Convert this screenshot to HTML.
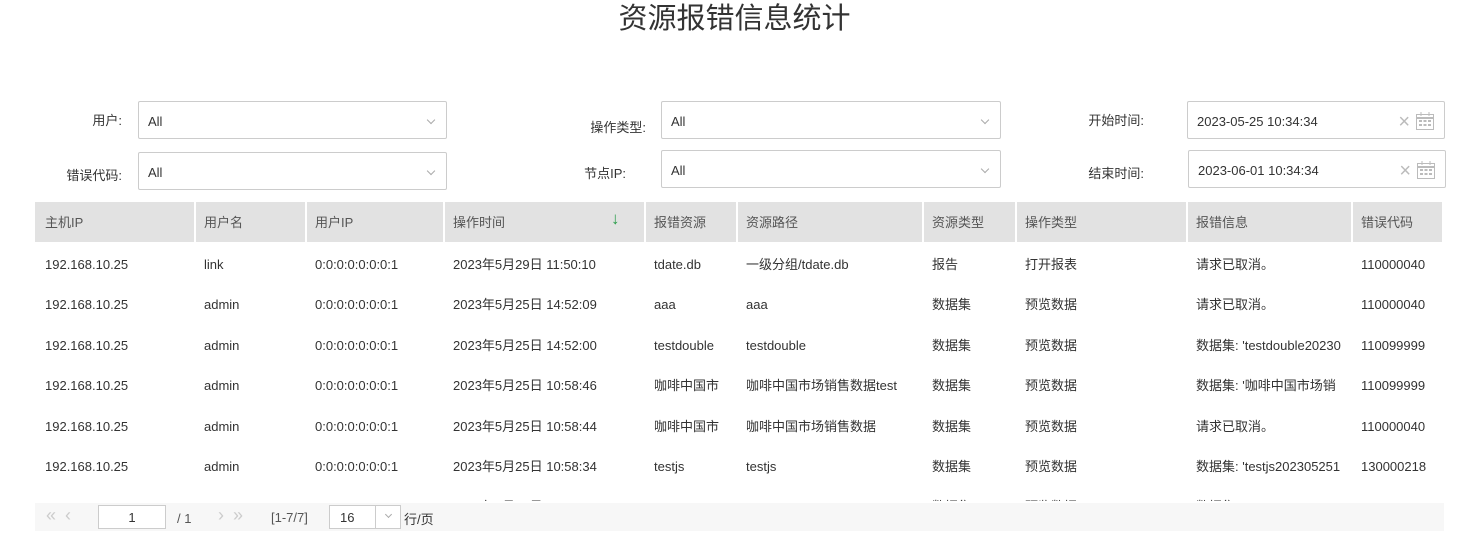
<!DOCTYPE html>
<html><head><meta charset="utf-8"><style>
*{box-sizing:border-box;margin:0;padding:0}
body{width:1469px;height:540px;background:#fff;font-family:"Liberation Sans","Noto Sans CJK SC",sans-serif;color:#333;font-size:13px;position:relative;overflow:hidden}
.a{position:absolute}
.t{left:0;width:1469px;top:0;text-align:center;font-size:29px;line-height:38px;color:#333}
.lbl{font-size:13px;text-align:right;color:#333}
.sel{border:1px solid #ccc;border-radius:2px;height:38px;line-height:40px;padding-left:9px;font-size:13px}
.chev{position:absolute;right:12px;top:15px;width:6px;height:6px;border-right:1px solid #aaa;border-bottom:1px solid #aaa;transform:rotate(45deg)}
.tbl{left:35px;top:202px;width:1409px;height:299px;overflow:hidden}
.row{position:absolute;left:0;height:40px;width:1409px}
.c{position:absolute;top:0;height:40px;line-height:42px;padding-left:8px;white-space:nowrap;overflow:hidden}
.c0{padding-left:10px}
.hd .c{background:#e2e2e2;color:#555}
.pg{left:35px;top:503px;width:1409px;height:28px;background:#f7f7f7;font-size:13px;color:#555}
</style></head><body>
<div class="a t">资源报错信息统计</div>

<div class="a lbl" style="left:60px;top:110px;width:62px">用户:</div>
<div class="a sel" style="left:138px;top:101px;width:309px">All<span class="chev"></span></div>
<div class="a lbl" style="left:40px;top:165px;width:82px">错误代码:</div>
<div class="a sel" style="left:138px;top:152px;width:309px">All<span class="chev"></span></div>

<div class="a lbl" style="left:560px;top:117px;width:86px">操作类型:</div>
<div class="a sel" style="left:661px;top:101px;width:340px">All<span class="chev"></span></div>
<div class="a lbl" style="left:560px;top:163px;width:66px">节点IP:</div>
<div class="a sel" style="left:661px;top:150px;width:340px">All<span class="chev"></span></div>

<div class="a lbl" style="left:1058px;top:110px;width:86px">开始时间:</div>
<div class="a sel" style="left:1187px;top:101px;width:258px">2023-05-25 10:34:34<span class="a" style="right:34px;top:0;color:#bbb;font-size:20px">×</span><svg class="a" style="right:9px;top:9px" width="20" height="20" viewBox="0 0 20 20"><rect x="1.5" y="3.5" width="17" height="15" fill="none" stroke="#bbb"/><line x1="1.5" y1="7" x2="18.5" y2="7" stroke="#bbb" stroke-width="2"/><line x1="6" y1="1" x2="6" y2="5" stroke="#bbb"/><line x1="14" y1="1" x2="14" y2="5" stroke="#bbb"/><g fill="#bbb"><rect x="4" y="9" width="3" height="2"/><rect x="8.5" y="9" width="3" height="2"/><rect x="13" y="9" width="3" height="2"/><rect x="4" y="13" width="3" height="2"/><rect x="8.5" y="13" width="3" height="2"/><rect x="13" y="13" width="3" height="2"/></g></svg></div>
<div class="a lbl" style="left:1058px;top:163px;width:86px">结束时间:</div>
<div class="a sel" style="left:1188px;top:150px;width:258px">2023-06-01 10:34:34<span class="a" style="right:34px;top:0;color:#bbb;font-size:20px">×</span><svg class="a" style="right:9px;top:9px" width="20" height="20" viewBox="0 0 20 20"><rect x="1.5" y="3.5" width="17" height="15" fill="none" stroke="#bbb"/><line x1="1.5" y1="7" x2="18.5" y2="7" stroke="#bbb" stroke-width="2"/><line x1="6" y1="1" x2="6" y2="5" stroke="#bbb"/><line x1="14" y1="1" x2="14" y2="5" stroke="#bbb"/><g fill="#bbb"><rect x="4" y="9" width="3" height="2"/><rect x="8.5" y="9" width="3" height="2"/><rect x="13" y="9" width="3" height="2"/><rect x="4" y="13" width="3" height="2"/><rect x="8.5" y="13" width="3" height="2"/><rect x="13" y="13" width="3" height="2"/></g></svg></div>

<div class="a tbl" id="tb"></div>
<div class="a pg">
<span class="a" style="left:11px;top:2px;color:#ccc;font-size:18px;letter-spacing:2px">«&nbsp;‹</span>
<div class="a" style="left:63px;top:2px;width:68px;height:24px;border:1px solid #ccc;background:#fff;text-align:center;line-height:24px;color:#333">1</div>
<span class="a" style="left:142px;top:8px">/ 1</span>
<span class="a" style="left:183px;top:2px;color:#ccc;font-size:18px;letter-spacing:2px">›&nbsp;»</span>
<span class="a" style="left:236px;top:7px">[1-7/7]</span>
<div class="a" style="left:294px;top:2px;width:72px;height:24px;border:1px solid #ccc;background:#fff;line-height:24px;padding-left:10px;color:#333">16<span class="a" style="left:45px;top:0;width:1px;height:22px;background:#ccc"></span><span class="chev" style="right:9px;top:6px;width:5px;height:5px"></span></div>
<span class="a" style="left:369px;top:6px;color:#333">行/页</span>
</div>
<script>
var x=[0,161,272,410,611,703,889,982,1153,1318,1409];
var h=["主机IP","用户名","用户IP","操作时间","报错资源","资源路径","资源类型","操作类型","报错信息","错误代码"];
var d=[
["192.168.10.25","link","0:0:0:0:0:0:0:1","2023年5月29日 11:50:10","tdate.db","一级分组/tdate.db","报告","打开报表","请求已取消。","110000040"],
["192.168.10.25","admin","0:0:0:0:0:0:0:1","2023年5月25日 14:52:09","aaa","aaa","数据集","预览数据","请求已取消。","110000040"],
["192.168.10.25","admin","0:0:0:0:0:0:0:1","2023年5月25日 14:52:00","testdouble","testdouble","数据集","预览数据","数据集: 'testdouble20230","110099999"],
["192.168.10.25","admin","0:0:0:0:0:0:0:1","2023年5月25日 10:58:46","咖啡中国市","咖啡中国市场销售数据test","数据集","预览数据","数据集: '咖啡中国市场销","110099999"],
["192.168.10.25","admin","0:0:0:0:0:0:0:1","2023年5月25日 10:58:44","咖啡中国市","咖啡中国市场销售数据","数据集","预览数据","请求已取消。","110000040"],
["192.168.10.25","admin","0:0:0:0:0:0:0:1","2023年5月25日 10:58:34","testjs","testjs","数据集","预览数据","数据集: 'testjs202305251","130000218"],
["192.168.10.25","admin","0:0:0:0:0:0:0:1","2023年5月25日 10:58:30","testjs","testjs","数据集","预览数据","数据集: 'testjs202305","130000218"]];
var s='<div class="row hd" style="top:0">';
for(var i=0;i<10;i++)s+='<div class="c'+(i==0?' c0':'')+'" style="left:'+x[i]+'px;width:'+(x[i+1]-x[i]-2)+'px">'+h[i]+(i==3?'<span style="position:absolute;left:166px;top:-4px;color:#2a9d4a;font-size:17px;font-weight:bold">↓</span>':'')+'</div>';
s+='</div>';
d.forEach(function(r,j){s+='<div class="row" style="top:'+(42+j*40.4)+'px">';for(var i=0;i<10;i++)s+='<div class="c'+(i==0?' c0':'')+'" style="left:'+x[i]+'px;width:'+(x[i+1]-x[i]-2)+'px">'+r[i]+'</div>';s+='</div>';});
document.getElementById('tb').innerHTML=s;
</script>
</body></html>
